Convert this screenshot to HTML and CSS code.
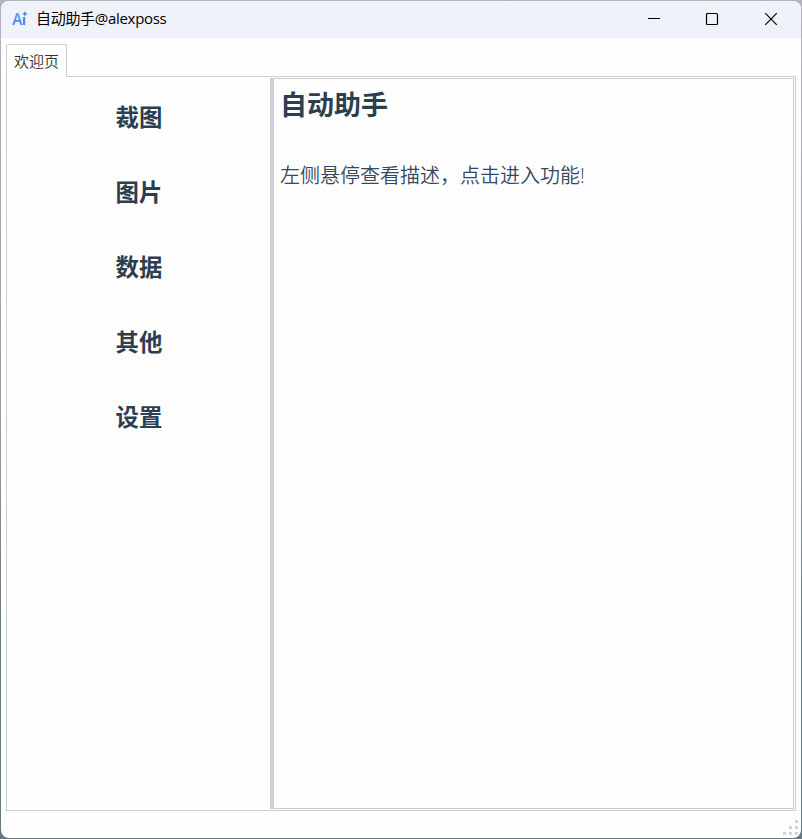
FILE: index.html
```
<!DOCTYPE html>
<html lang="zh-CN">
<head>
  <meta charset="UTF-8">
  <meta name="viewport" content="width=device-width, initial-scale=1.0">
  <title>自动助手@alexposs</title>
  <link rel="stylesheet" href="styles.css">
</head>
<body>
  <div class="window">
    <header class="titlebar">
      <svg class="logo" width="16" height="16" viewBox="0 0 16 16">
        <defs>
          <linearGradient id="logoFill" x1="0" y1="0" x2="0" y2="1">
            <stop offset="0" stop-color="#62a2ee"/>
            <stop offset="1" stop-color="#3f78f0"/>
          </linearGradient>
        </defs>
        <text x="0.3" y="14" textLength="10" lengthAdjust="spacingAndGlyphs" fill="url(#logoFill)">A</text>
        <rect x="11" y="6" width="2.2" height="8" fill="#4a84ee"/>
        <path d="M12.9 0.2l0.9 1.8 1.8 0.9-1.8 0.9-0.9 1.8-0.9-1.8-1.8-0.9 1.8-0.9z" fill="#4380f2"/>
      </svg>
      <h1>自动助手@alexposs</h1>
      <div class="controls">
        <svg width="14" height="14" viewBox="0 0 14 14"><path d="M1 6.5h12"/></svg>
        <svg width="14" height="14" viewBox="0 0 14 14"><rect x="1.5" y="1.5" width="11" height="11" rx="1"/></svg>
        <svg class="close" width="14" height="14" viewBox="0 0 14 14"><path d="M1.2 1.2l11.6 11.6M12.8 1.2L1.2 12.8"/></svg>
      </div>
    </header>

    <div class="tabs">
      <div class="tab">欢迎页</div>
    </div>

    <main class="pane">
      <nav class="menu">
        <div class="menu-item">裁图</div>
        <div class="menu-item">图片</div>
        <div class="menu-item">数据</div>
        <div class="menu-item">其他</div>
        <div class="menu-item">设置</div>
      </nav>
      <div class="splitter"></div>
      <section class="description">
        <h2>自动助手</h2>
        <p>左侧悬停查看描述，点击进入功能!</p>
      </section>
    </main>

    <footer class="statusbar">
      <svg class="grip" width="15" height="15" viewBox="0 0 15 15">
        <path d="M12 0h3v3h-3zM6 6h3v3h-3zM12 6h3v3h-3zM0 12h3v3h-3zM6 12h3v3h-3zM12 12h3v3h-3z"/>
      </svg>
    </footer>
  </div>
</body>
</html>
```
FILE: styles.css
```
* {
  box-sizing: border-box;
}

body {
  margin: 0;
  height: 100vh;
  overflow: hidden;
  background: linear-gradient(#b3b3bb, #9a9ca3 50%, #667982 75%, #667982);
  font-family: "Open Sans", "Noto Sans CJK SC", sans-serif;
}

.window {
  display: flex;
  flex-direction: column;
  height: 100vh;
  overflow: hidden;
  background-color: #fefefe;
  background-clip: padding-box;
  border: 1px solid transparent;
  border-radius: 9px;
}

/* Title bar */
.titlebar {
  display: flex;
  align-items: center;
  flex: 0 0 37px;
  padding: 0 23px 0 11px;
  background-color: #eff3f9;
}

.logo {
  overflow: visible;
  margin-bottom: 1px;
  font-family: "Open Sans", sans-serif;
  font-size: 16px;
  font-weight: 600;
  line-height: 16px;
}

.titlebar h1 {
  margin: 0 0 3px 8px;
  font-size: 15px;
  font-weight: normal;
  line-height: 20px;
  letter-spacing: -0.3px;
  color: #000;
}

.controls {
  display: flex;
  gap: 44px;
  margin: 0 0 1px auto;
}

.controls svg {
  fill: none;
  stroke: #000;
  stroke-width: 1.2;
}

.controls .close {
  margin-left: 1px;
}

/* Tabs */
.tabs {
  display: flex;
  flex: 0 0 39px;
  padding: 6px 0 0 5px;
}

.tab {
  z-index: 1;
  width: 61px;
  height: 33px;
  padding-left: 7px;
  border: 1px solid #c9cfd2;
  border-bottom: 0;
  border-radius: 2px 2px 0 0;
  background-color: #fefefe;
  font-size: 15px;
  font-weight: 350;
  line-height: 33px;
  color: #333;
}

.pane {
  display: flex;
  flex: 1;
  margin: -1px 5px 0;
  padding: 1px 1px 1px 0;
  border: 1px solid #c9cfd2;
}

.menu {
  width: 263px;
  padding: 2px 0 0 1px;
}

.menu-item {
  height: 75px;
  line-height: 75px;
  font-size: 23.4px;
  font-weight: bold;
  text-align: center;
  color: #2c3e50;
}

.splitter {
  width: 4px;
  background-color: #cfd1da;
}

.description {
  flex: 1;
  padding: 0 0 0 6px;
  border: 1px solid #c9cbd2;
  border-left: 0;
}

.description h2 {
  margin: 6px 0 0;
  font-size: 27px;
  line-height: 40px;
  color: #2c3e50;
}

.description p {
  margin: 36px 0 0;
  font-size: 20px;
  font-weight: 350;
  line-height: 30px;
  color: #34495e;
}

.statusbar {
  display: flex;
  justify-content: flex-end;
  flex: 0 0 27px;
  padding: 9px 3px 0 0;
}

.grip {
  fill: #d2d3d8;
}
```
